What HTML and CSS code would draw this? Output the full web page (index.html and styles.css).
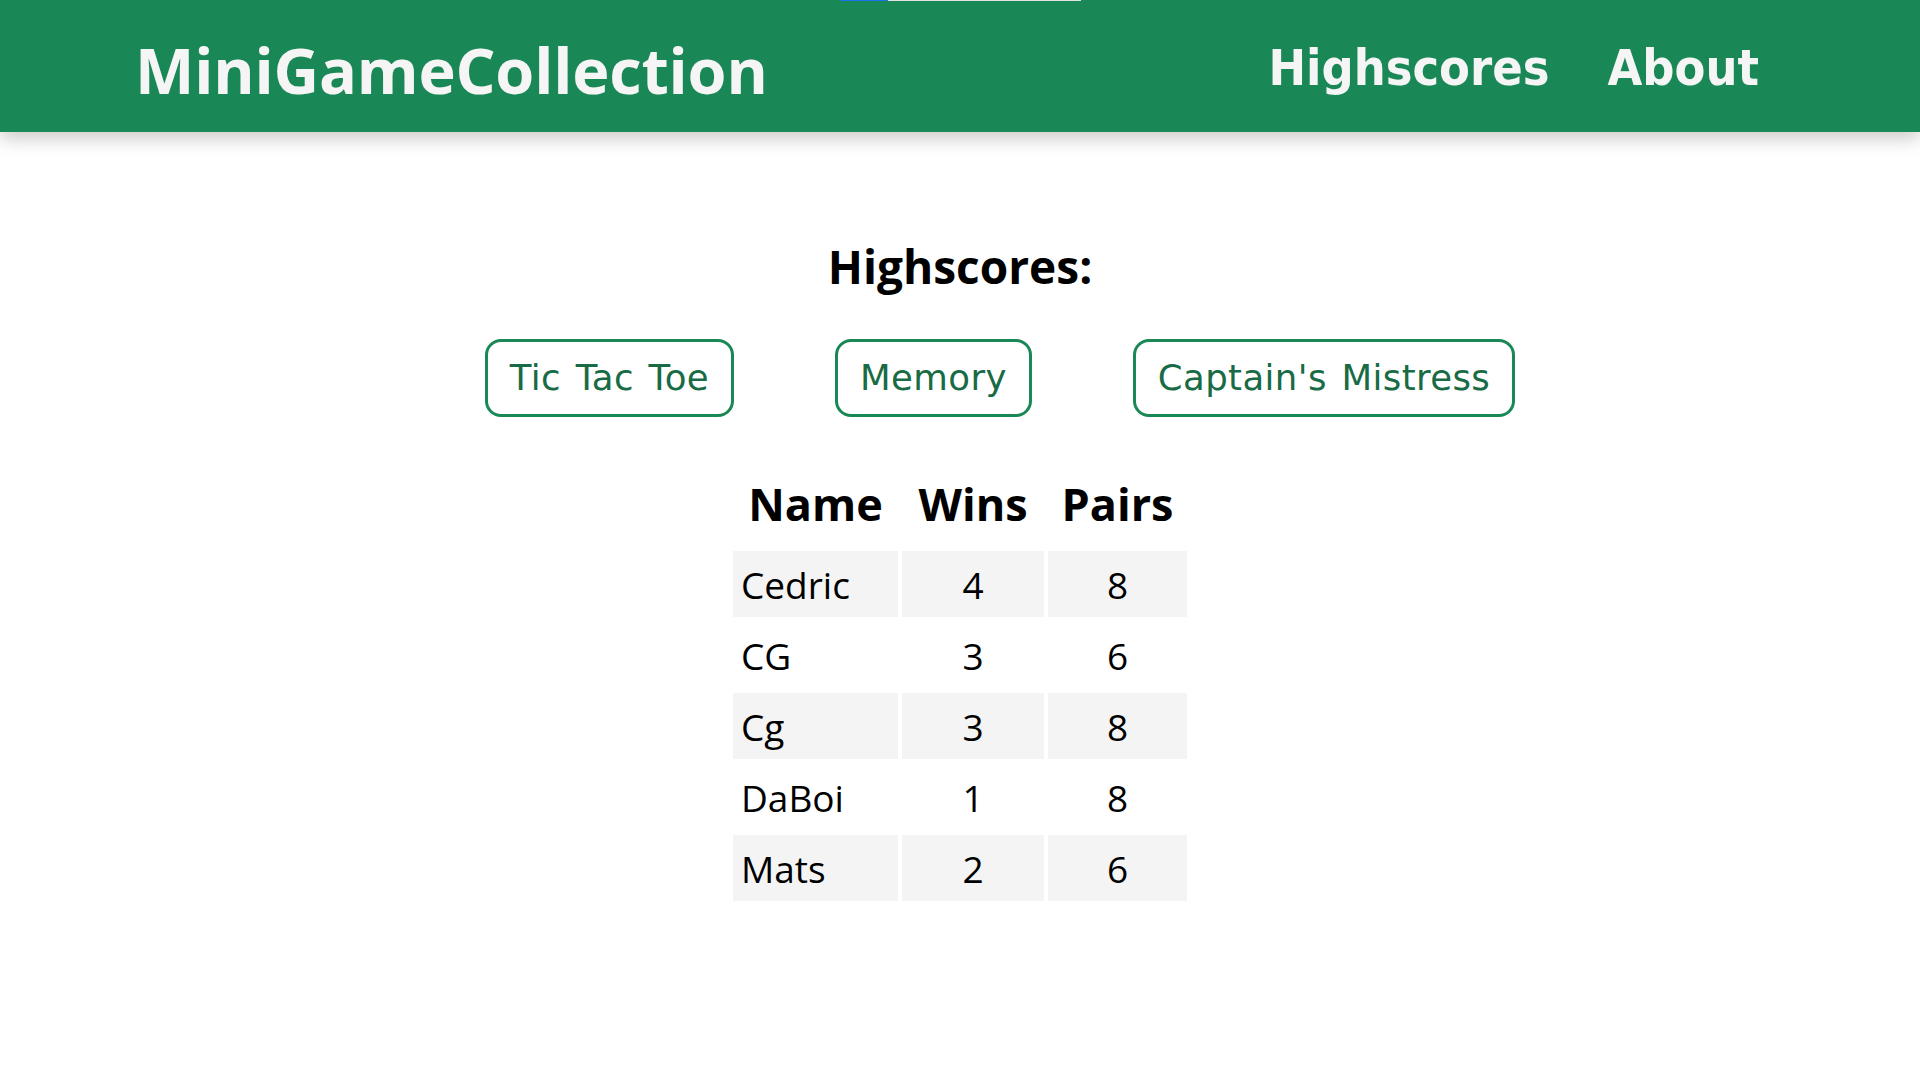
FILE: index.html
```html
<!DOCTYPE html>
<html lang="en">
<head>
    <meta charset="UTF-8">
    <meta name="viewport" content="width=device-width, initial-scale=1.0">
    <title>MiniGameCollection - Highscores</title>
    <link rel="stylesheet" href="styles.css">
</head>
<body>
    <!-- loading indicator -->
    <div class="loadbar"><span class="loadbar-fill"></span></div>

    <header class="topbar">
        <h1 class="brand">MiniGameCollection</h1>
        <nav class="nav">
            <a href="#">Highscores</a>
            <a href="#">About</a>
        </nav>
    </header>

    <main class="content">
        <h2 class="title">Highscores:</h2>
        <div class="game-tabs">
            <button class="game-btn">Tic Tac Toe</button>
            <button class="game-btn">Memory</button>
            <button class="game-btn">Captain's Mistress</button>
        </div>

        <table class="scores">
            <thead>
                <tr>
                    <th class="col-name">Name</th>
                    <th class="col-wins">Wins</th>
                    <th class="col-pairs">Pairs</th>
                </tr>
            </thead>
            <tbody>
                <tr><td>Cedric</td><td>4</td><td>8</td></tr>
                <tr><td>CG</td><td>3</td><td>6</td></tr>
                <tr><td>Cg</td><td>3</td><td>8</td></tr>
                <tr><td>DaBoi</td><td>1</td><td>8</td></tr>
                <tr><td>Mats</td><td>2</td><td>6</td></tr>
            </tbody>
        </table>
    </main>
</body>
</html>
```

FILE: styles.css
```css
/* base */
body {
    margin: 0;
    padding: 0;
    font-family: 'Open Sans', 'Noto Sans', sans-serif;
    color: #000;
    background: #fff;
}

/* thin loading bar at the very top */
.loadbar {
    position: fixed;
    top: 0;
    left: 840px;
    width: 241px;
    height: 1px;
    background: #e3e3e3;
    z-index: 10;
}
.loadbar-fill {
    display: block;
    width: 48px;
    height: 100%;
    background: #1a73e8;
}

/* header */
.topbar {
    display: flex;
    align-items: center;
    justify-content: space-between;
    height: 132px;
    padding: 0 161px 0 135px;
    background: #1a8756;
    box-shadow: 0 6px 18px rgba(0, 0, 0, 0.22);
}
.brand {
    margin: 0;
    padding-top: 6px;
    font-size: 63px;
    font-weight: 700;
    letter-spacing: -0.2px;
    color: #f5f5f5;
}
.nav {
    display: flex;
    gap: 58px;
    padding-top: 4px;
}
.nav a {
    font-family: 'DejaVu Sans Condensed', 'DejaVu Sans', sans-serif;
    font-stretch: condensed;
    font-size: 50px;
    font-weight: bold;
    color: #f5f5f5;
    text-decoration: none;
}

/* page content */
.content {
    text-align: center;
    padding-top: 103px;
}
.title {
    margin: 0;
    font-size: 46px;
    font-weight: 700;
    line-height: 62px;
}
.game-tabs {
    display: flex;
    justify-content: center;
    gap: 101px;
    padding-left: 80px;
    margin-top: 42px;
}
.game-btn {
    font-family: 'DejaVu Sans', Verdana, sans-serif;
    font-size: 35.5px;
    letter-spacing: 0.4px;
    word-spacing: 3px;
    color: #186b44;
    background: #fff;
    border: 3px solid #1a8756;
    border-radius: 16px;
    padding: 14px 22px;
    line-height: 44px;
    cursor: pointer;
}

/* highscore table */
.scores {
    margin: 49px auto 0;
    border-spacing: 4px 5px;
}
.scores th {
    font-size: 45px;
    font-weight: 700;
    height: 64px;
    padding: 0 0 11px;
}
.scores td {
    font-size: 37px;
    height: 66px;
    padding: 0;
    text-align: center;
}
.scores td:first-child {
    text-align: left;
    padding-left: 8px;
}
.col-name { width: 165px; }
.col-wins { width: 142px; }
.col-pairs { width: 139px; }
.scores tbody tr:nth-child(odd) td {
    background: #f4f4f4;
}
```
